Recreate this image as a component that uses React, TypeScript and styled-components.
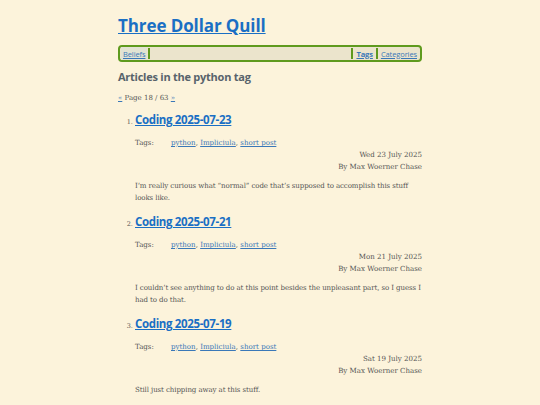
import styled, { createGlobalStyle } from "styled-components";

const GlobalStyle = createGlobalStyle`
  html, body {
    margin: 0;
    padding: 0;
    background: #fcf3db;
  }
  body {
    font-family: "DejaVu Serif", serif;
    color: #555;
  }
`;

const articles = [
  {
    title: "Coding 2025-07-23",
    date: "Wed 23 July 2025",
    text: "I’m really curious what “normal” code that’s supposed to accomplish this stuff looks like.",
  },
  {
    title: "Coding 2025-07-21",
    date: "Mon 21 July 2025",
    text: "I couldn’t see anything to do at this point besides the unpleasant part, so I guess I had to do that.",
  },
  {
    title: "Coding 2025-07-19",
    date: "Sat 19 July 2025",
    text: "Still just chipping away at this stuff.",
  },
];

const tags = ["python", "Impliciula", "short post"];

const App = () => {
  return (
    <>
      <GlobalStyle />
      <Page>
        <Title href="#">Three Dollar Quill</Title>
        <Nav>
          <NavLink href="#" $tint>
            Beliefs
          </NavLink>
          <Sep />
          <Spacer />
          <Sep />
          <NavLink href="#" $current>
            Tags
          </NavLink>
          <Sep />
          <NavLink href="#">Categories</NavLink>
        </Nav>
        <Heading>Articles in the python tag</Heading>
        <Pager>
          <SmallLink href="#">«</SmallLink> Page 18 / 63{" "}
          <SmallLink href="#">»</SmallLink>
        </Pager>
        <List>
          {articles.map((a) => (
            <Item key={a.title}>
              <ArticleTitle href="#">{a.title}</ArticleTitle>
              <Meta>
                <TagRow>
                  <TagLabel>Tags:</TagLabel>
                  <span>
                    {tags.map((t, i) => (
                      <span key={t}>
                        <SmallLink href="#">{t}</SmallLink>
                        {i < tags.length - 1 ? ", " : ""}
                      </span>
                    ))}
                  </span>
                </TagRow>
                <Byline>{a.date}</Byline>
                <Byline>By Max Woerner Chase</Byline>
              </Meta>
              <Summary>{a.text}</Summary>
            </Item>
          ))}
        </List>
      </Page>
    </>
  );
};

export default App;

const Page = styled.div`
  width: 304px;
  margin: 0 auto;
  padding-top: 15px;
  display: flex;
  flex-direction: column;
`;

const Title = styled.a`
  font-family: "Open Sans", sans-serif;
  font-weight: 700;
  font-size: 17px;
  line-height: 22px;
  color: #1a6fc4;
  text-decoration: underline;
  align-self: flex-start;
  letter-spacing: -0.1px;
`;

const Nav = styled.nav`
  margin-top: 8px;
  height: 13px;
  display: flex;
  align-items: stretch;
  border: 2px solid #5f9a1e;
  border-radius: 4px;
  background: #ebe4cc;
  padding: 0 1px;
  font-family: "Open Sans", sans-serif;
  font-size: 7.5px;
  letter-spacing: -0.1px;
`;

const NavLink = styled.a<{ $current?: boolean; $tint?: boolean }>`
  display: flex;
  align-items: center;
  padding: 0 2px;
  color: #3a78b8;
  background: ${(p) => (p.$tint ? "#e2e3d3" : "transparent")};
  font-weight: ${(p) => (p.$current ? 700 : 400)};
  text-decoration: underline;
`;

const Sep = styled.span`
  width: 2px;
  margin: 1px 1px;
  background: #5f9a1e;
`;

const Spacer = styled.span`
  flex: 1;
`;

const Heading = styled.h2`
  margin: 6px 0 0;
  font-family: "Open Sans", sans-serif;
  font-weight: 700;
  font-size: 11px;
  line-height: 18px;
  color: #58636b;
  letter-spacing: -0.25px;
`;

const Pager = styled.div`
  margin-top: 6px;
  font-size: 7px;
  line-height: 12px;
  color: #555;
`;

const SmallLink = styled.a`
  color: #3a78b8;
  text-decoration: underline;
`;

const List = styled.ol`
  margin: 6px 0 0;
  padding-left: 17px;
  font-size: 6.5px;
  color: #555;
`;

const Item = styled.li`
  margin-bottom: 8px;
`;

const ArticleTitle = styled.a`
  font-family: "Open Sans", sans-serif;
  font-weight: 700;
  font-size: 11.5px;
  line-height: 20px;
  color: #1a6fc4;
  text-decoration: underline;
  letter-spacing: -0.35px;
`;

const Meta = styled.div`
  margin-top: 7px;
  display: flex;
  flex-direction: column;
  font-size: 7.05px;
  line-height: 12px;
`;

const TagRow = styled.div`
  display: flex;
`;

const TagLabel = styled.span`
  width: 36px;
`;

const Byline = styled.div`
  text-align: right;
`;

const Summary = styled.p`
  margin: 7px 0 0;
  font-size: 7.05px;
  line-height: 12px;
  letter-spacing: -0.1px;
`;
